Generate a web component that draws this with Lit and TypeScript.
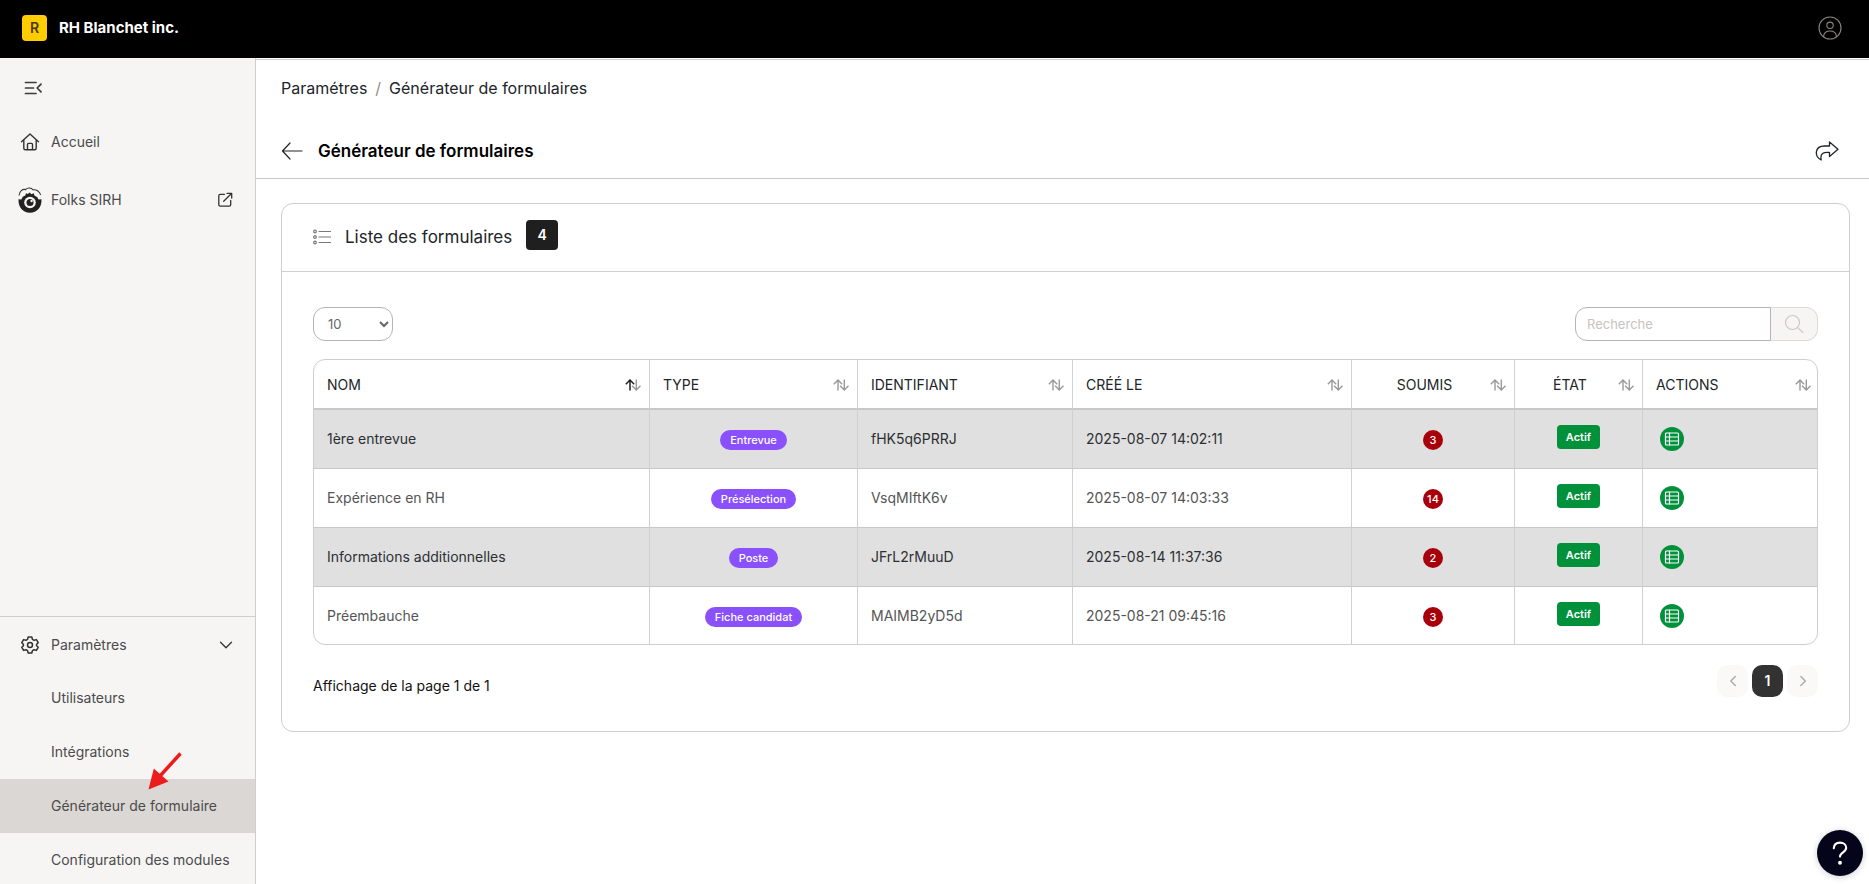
import { LitElement, html, css, svg } from "lit";
import { customElement, state } from "lit/decorators.js";
import { classMap } from "lit/directives/class-map.js";

interface FormRow {
  name: string;
  type: string;
  id: string;
  created: string;
  submitted: number;
}

const ROWS: FormRow[] = [
  { name: "1ère entrevue", type: "Entrevue", id: "fHK5q6PRRJ", created: "2025-08-07 14:02:11", submitted: 3 },
  { name: "Expérience en RH", type: "Présélection", id: "VsqMIftK6v", created: "2025-08-07 14:03:33", submitted: 14 },
  { name: "Informations additionnelles", type: "Poste", id: "JFrL2rMuuD", created: "2025-08-14 11:37:36", submitted: 2 },
  { name: "Préembauche", type: "Fiche candidat", id: "MAIMB2yD5d", created: "2025-08-21 09:45:16", submitted: 3 },
];

const COLUMNS = [
  { label: "NOM", cls: "c-name", center: false },
  { label: "TYPE", cls: "c-type", center: false },
  { label: "IDENTIFIANT", cls: "c-id", center: false },
  { label: "CRÉÉ LE", cls: "c-date", center: false },
  { label: "SOUMIS", cls: "c-count", center: true },
  { label: "ÉTAT", cls: "c-state", center: true },
  { label: "ACTIONS", cls: "c-actions", center: false },
];

const SETTINGS = ["Utilisateurs", "Intégrations", "Générateur de formulaire", "Configuration des modules"];

const icon = (w: number, h: number, body: unknown, sw = 1.5) => html`<svg
  width=${w} height=${h} viewBox="0 0 ${w} ${h}" fill="none" stroke="currentColor"
  stroke-width=${sw} stroke-linecap="round" stroke-linejoin="round" aria-hidden="true">${body}</svg>`;

const userIcon = icon(24, 24, svg`<circle cx="12" cy="12" r="11"/><circle cx="12" cy="9.3" r="3.2"/><path d="M5.6 20.4c.3-3.600 2.600-5.400 6.400-5.400s6.100 1.800 6.400 5.400"/>`, 1.1);
const collapseIcon = icon(18, 14, svg`<path d="M1.500 1.500h10.500M1.500 7h8M1.500 12.500h10.500M17 3.200L13.200 7l3.800 3.800"/>`, 1.700);
const homeIcon = icon(20, 20, svg`<path d="M1.500 9.800L10 2l8.500 7.800M3.800 8v8.300c0 .9.600 1.500 1.500 1.500h9.400c.9 0 1.500-.6 1.500-1.500V8M7.500 17.600v-5.200c0-.6.400-1 1-1h3c.6 0 1 .4 1 1v5.200"/>`, 1.400);
const externalIcon = icon(16, 16, svg`<path d="M7.500 2.300H3.200c-.8 0-1.400.6-1.400 1.400v9.100c0 .8.600 1.400 1.400 1.400h9.100c.8 0 1.400-.6 1.400-1.400V8.500M10 1.300h4.700V6M14.500 1.500L6.700 9.300"/>`, 1.300);
const gearIcon = icon(20, 20, svg`<path d="M8.200 2h3.600l.6 2.300 1.700 1 2.300-.7 1.800 3.100L16.600 9.300v1.400l1.600 1.600-1.800 3.100-2.300-.7-1.700 1-.6 2.300H8.200l-.6-2.300-1.700-1-2.300.7-1.800-3.100 1.600-1.600V9.300L1.800 7.700l1.800-3.100 2.300.7 1.700-1z"/><circle cx="10" cy="10" r="2.500"/>`, 1.500);
const chevronIcon = icon(14, 8, svg`<path d="M1.500 1.200L7 6.700l5.500-5.500"/>`, 1.300);
const backIcon = icon(22, 18, svg`<path d="M21 9H1.500M9 1L1.500 9L9 17"/>`, 1.200);
const shareIcon = icon(24, 20, svg`<path d="M14.500 1L23 8.200L14.500 15.500V11.500C8.500 10.900 4.800 12.300 6.200 19C-.8 15.500-.6 5 9.500 5H14.500z"/>`, 1.300);
const listIcon = icon(18, 16, svg`<circle cx="2" cy="2.500" r="1.300"/><circle cx="2" cy="8" r="1.300"/><circle cx="2" cy="13.500" r="1.300"/><path d="M6 2.500h11.500M6 8h11.500M6 13.500h11.500"/>`, 1.200);
const searchIcon = icon(20, 20, svg`<circle cx="8.500" cy="8.500" r="7"/><path d="M13.600 13.600L19 18.500"/>`, 1.200);
const prevIcon = icon(8, 12, svg`<path d="M6.300 1.500L1.800 6l4.500 4.500"/>`, 1.400);
const nextIcon = icon(8, 12, svg`<path d="M1.800 1.500L6.300 6l-4.500 4.500"/>`, 1.400);
const gridIcon = icon(16, 16, svg`<rect x="1.500" y="2" width="13" height="12" rx="1"/><path d="M5.500 2v12M1.500 6h13M1.500 10h13"/>`, 1.200);
const helpIcon = icon(16, 24, svg`<path d="M1.800 7.200C2 3.600 4.600 1.600 8 1.600c3.400 0 6.200 2 6.200 5.200 0 4.800-6.200 4.200-6.200 8.800"/><circle cx="8" cy="21.800" r=".9" fill="currentColor"/>`, 2.100);
const folksLogo = html`<svg width="24" height="26" viewBox="0 0 24 26" aria-hidden="true">
  <path d="M1 8.500C1.500 4 4.500 1.800 7.500 2.600 9.500.3 13.500.6 15 2.800c3.500-.4 6.800 1.700 7.600 5.200" fill="none" stroke="#333" stroke-width="1.100"/>
  <path d="M.5 12.200l2.800.2 1.500-2.600 2.500-1.300.7-2.300 1.700.9 2-1.600 1.700 1.700 2.300-.9.9 2.500 2.500 1.300 1.500 2.300 2.900-.2C24 20 19 25.700 12 25.700S0 20 .5 12.200z" fill="#222"/>
  <circle cx="12" cy="15.500" r="5.800" fill="#f6f5f4"/>
  <circle cx="12" cy="15.500" r="3.500" fill="#222"/>
  <circle cx="13.600" cy="14" r="1.200" fill="#f6f5f4"/>
</svg>`;
const sortIcon = html`<svg width="16" height="12" viewBox="0 0 16 12" fill="none" stroke="currentColor" stroke-width="1.400" aria-hidden="true">
  <path class="up" d="M5 11.500V1M.8 5.200L5 1l4.200 4.200"/><path d="M11.300 .5V11M7.100 6.800L11.300 11l4.200-4.200"/></svg>`;

@customElement("app-root")
export class AppRoot extends LitElement {
  @state() private current = "Générateur de formulaire";

  static styles = css`
    :host {
      display: flex;
      flex-direction: column;
      height: 100vh;
      overflow: hidden;
      font-family: Inter, "Liberation Sans", sans-serif;
      font-size: 14px;
      line-height: 20px;
      color: #212529;
      background: #fff;
    }
    * { box-sizing: border-box; }
    svg { display: block; flex: none; }
    button { font: inherit; color: inherit; background: none; border: 0; padding: 0; cursor: pointer; }
    a { color: inherit; text-decoration: none; }
    .topbar {
      flex: none;
      height: 58px;
      padding: 0 27px 3px 22px;
      display: flex;
      align-items: center;
      justify-content: space-between;
      background: #000;
    }
    .brand { display: flex; align-items: center; gap: 12px; color: #fff; font-size: 15px; font-weight: 700; }
    .brand-mark {
      width: 25px; height: 26px; border-radius: 4px;
      display: grid; place-items: center;
      background: #fc0; color: #453a10; font-size: 14px; font-weight: 600;
    }
    .user { color: #8a8682; }
    .shell { flex: 1; min-height: 0; display: flex; }
    .sidebar {
      flex: none;
      width: 256px;
      display: flex;
      flex-direction: column;
      overflow: hidden;
      background: #f6f5f4;
      border-right: 1px solid #d0cecd;
      color: #4b4b4b;
    }
    .side-top { flex: 1; min-height: 0; padding-top: 4px; display: flex; flex-direction: column; }
    .collapse { height: 51px; padding-left: 24px; display: flex; align-items: center; color: #3c3c3c; }
    .nav-item {
      height: 54px;
      padding: 0 22px 0 51px;
      display: flex;
      align-items: center;
      justify-content: space-between;
    }
    .nav-item.lead { padding-left: 18px; justify-content: flex-start; gap: 9px; }
    .lead .glyph { width: 24px; display: flex; justify-content: center; color: #333; }
    .lead .end { margin-left: auto; color: #333; }
    .side-top .nav-item { height: 58px; }
    .side-bottom { flex: none; border-top: 1px solid #d0cecd; margin-bottom: -3px; }
    .side-bottom .lead { padding-top: 2px; }
    .nav-item.active { background: #dbd7d4; }
    main { flex: 1; min-width: 0; overflow: hidden; border-top: 1px solid #d0cecd; margin-top: 1px; }
    .crumbs { padding: 18px 25px; display: flex; gap: 8px; font-size: 16px; }
    .crumbs .sep { color: #8f8f8f; }
    .page-head {
      height: 63px;
      padding: 7px 30px 0 25px;
      display: flex;
      align-items: center;
      gap: 15px;
      border-bottom: 1px solid #c8c8c8;
    }
    h1 { margin: 0; font-size: 17px; font-weight: 600; color: #000; }
    .share { margin-left: auto; }
    .card { margin: 24px 19px 24px 25px; border: 1px solid #d0cecd; border-radius: 12px; }
    .card-head { height: 68px; padding: 0 31px 2px; display: flex; align-items: center; gap: 14px; border-bottom: 1px solid #d0d0d0; }
    .card-head svg { color: #777; }
    h2 { margin: 0; font-size: 17px; font-weight: 400; }
    .count {
      width: 32px; height: 30px; margin-bottom: 3px; border-radius: 4px;
      display: grid; place-items: center;
      background: #1f1f1f; color: #fff; font-size: 14px; font-weight: 600;
    }
    .card-body { padding: 35px 31px 34px; }
    .tools { display: flex; justify-content: space-between; margin-bottom: 18px; }
    select, input { font: inherit; font-size: 13px; color: #666; background: #fff; outline: 0; }
    select { width: 80px; height: 34px; padding: 0 0 0 10px; border: 1px solid #b5b5b5; border-radius: 12px; }
    .search { display: flex; }
    .search input {
      width: 196px; height: 34px; padding: 0 11px;
      border: 1px solid #b5b5b5; border-radius: 12px 0 0 12px;
    }
    input::placeholder { color: #c8c3be; }
    .search button {
      width: 47px; height: 34px; display: grid; place-items: center;
      background: #f6f5f4; border: 1px solid #dddbd9; border-left: 0; border-radius: 0 12px 12px 0; color: #ccc7c3;
    }
    .frame { border: 1px solid #d0cecd; border-radius: 12px; overflow: hidden; }
    table { width: 100%; table-layout: fixed; border-collapse: separate; border-spacing: 0; }
    .c-name { width: 336px; }
    .c-type { width: 208px; }
    .c-id { width: 215px; }
    .c-date { width: 279px; }
    .c-count { width: 163px; }
    .c-state { width: 128px; }
    .c-actions { width: 176px; }
    th, td { border-right: 1px solid #d0d0d0; text-align: left; font-weight: 400; }
    th:last-child, td:last-child { border-right: 0; }
    th { height: 50px; padding: 1px 8px 0 13px; border-bottom: 2px solid #c8c8c8; }
    .th { display: flex; align-items: center; gap: 6px; width: 100%; }
    .th .lbl { flex: 1; text-align: left; }
    .th.center .lbl { text-align: center; }
    .th svg { color: #999; }
    .th.sorted .up { stroke: #222; stroke-width: 1.5; }
    td { height: 59px; padding: 0 13px; border-bottom: 1px solid #c8c8c8; color: #555; }
    tr:last-child td { border-bottom: 0; height: 57px; }
    tbody tr:nth-child(odd) td { background: #e0e0e0; color: #2c2f33; }
    td.mid > span { display: flex; width: fit-content; margin: 0 auto; align-items: center; justify-content: center; color: #fff; font-size: 11px; }
    .pill { height: 20px; padding: 0 10px; border-radius: 10px; background: #8950fc; font-weight: 500; position: relative; top: 1px; }
    .num { min-width: 20px; height: 20px; border-radius: 10px; background: #a8000b; font-weight: 500; position: relative; top: 1px; }
    .state { height: 24px; padding: 0 9px; border-radius: 4px; background: #00913a; font-weight: 600; position: relative; top: -2px; }
    .open { width: 24px; height: 24px; margin-left: 4px; border-radius: 50%; display: grid; place-items: center; background: #00913a; color: #fff; }
    .foot { display: flex; justify-content: space-between; align-items: flex-start; padding-top: 20px; }
    .foot p { margin: 0; padding-top: 11px; color: #111; }
    .pager { display: flex; gap: 4px; }
    .pager button { width: 31px; height: 32px; border-radius: 10px; display: grid; place-items: center; background: #faf9f8; color: #aaa; }
    .pager .on { background: #323232; color: #fff; font-weight: 600; }
    .help {
      position: absolute; right: 6px; bottom: 8px; width: 46px; height: 46px; border-radius: 50%;
      display: grid; place-items: center; background: #04041a; color: #fff; box-shadow: 0 1px 6px rgba(0, 0, 0, 0.2);
    }
    .pointer { position: absolute; left: 148px; bottom: 94px; }
  `;

  private pick(label: string, e: Event) {
    e.preventDefault();
    this.current = label;
  }

  render() {
    return html`
      <header class="topbar">
        <div class="brand"><span class="brand-mark">R</span><span>RH Blanchet inc.</span></div>
        <button class="user" aria-label="Compte">${userIcon}</button>
      </header>
      <div class="shell">
        <nav class="sidebar">
          <div class="side-top">
            <button class="collapse" aria-label="Réduire le menu">${collapseIcon}</button>
            <a class="nav-item lead" href="#"><span class="glyph">${homeIcon}</span>Accueil</a>
            <a class="nav-item lead" href="#"><span class="glyph">${folksLogo}</span>Folks SIRH<span class="end">${externalIcon}</span></a>
          </div>
          <div class="side-bottom">
            <a class="nav-item lead" href="#"><span class="glyph">${gearIcon}</span>Paramètres<span class="end">${chevronIcon}</span></a>
            ${SETTINGS.map((s) => html`<a href="#" @click=${(e: Event) => this.pick(s, e)}
              class=${classMap({ "nav-item": true, active: s === this.current })}>${s}</a>`)}
          </div>
        </nav>
        <main>
          <div class="crumbs"><a href="#">Paramétres</a><span class="sep">/</span><span>Générateur de formulaires</span></div>
          <div class="page-head">
            <button aria-label="Retour">${backIcon}</button>
            <h1>Générateur de formulaires</h1>
            <button class="share" aria-label="Partager">${shareIcon}</button>
          </div>
          <section class="card">
            <div class="card-head">${listIcon}<h2>Liste des formulaires</h2><span class="count">4</span></div>
            <div class="card-body">
              <div class="tools">
                <select aria-label="Lignes par page"><option>10</option><option>25</option><option>50</option></select>
                <div class="search"><input type="text" placeholder="Recherche" aria-label="Recherche"><button aria-label="Lancer la recherche">${searchIcon}</button></div>
              </div>
              <div class="frame">
                <table>
                  <thead><tr>${COLUMNS.map((c, i) => html`<th class=${c.cls} scope="col">
                    <button class=${classMap({ th: true, center: c.center, sorted: i === 0 })}><span class="lbl">${c.label}</span>${sortIcon}</button></th>`)}</tr></thead>
                  <tbody>${ROWS.map((r) => html`<tr>
                    <td>${r.name}</td>
                    <td class="mid"><span class="pill">${r.type}</span></td>
                    <td>${r.id}</td>
                    <td>${r.created}</td>
                    <td class="mid"><span class="num">${r.submitted}</span></td>
                    <td class="mid"><span class="state">Actif</span></td>
                    <td><button class="open" aria-label="Voir les réponses">${gridIcon}</button></td>
                  </tr>`)}</tbody>
                </table>
              </div>
              <div class="foot">
                <p>Affichage de la page 1 de 1</p>
                <div class="pager">
                  <button aria-label="Page précédente">${prevIcon}</button>
                  <button class="on">1</button>
                  <button aria-label="Page suivante">${nextIcon}</button>
                </div>
              </div>
            </div>
          </section>
        </main>
      </div>
      <svg class="pointer" width="36" height="39" viewBox="0 0 36 39" aria-hidden="true">
        <path d="M32.500 2.500L12 25" stroke="#ed1c1c" stroke-width="3.500"/><path d="M.5 38.500L5.800 17.500L20.500 30.500z" fill="#ed1c1c"/>
      </svg>
      <button class="help" aria-label="Aide">${helpIcon}</button>
    `;
  }
}
